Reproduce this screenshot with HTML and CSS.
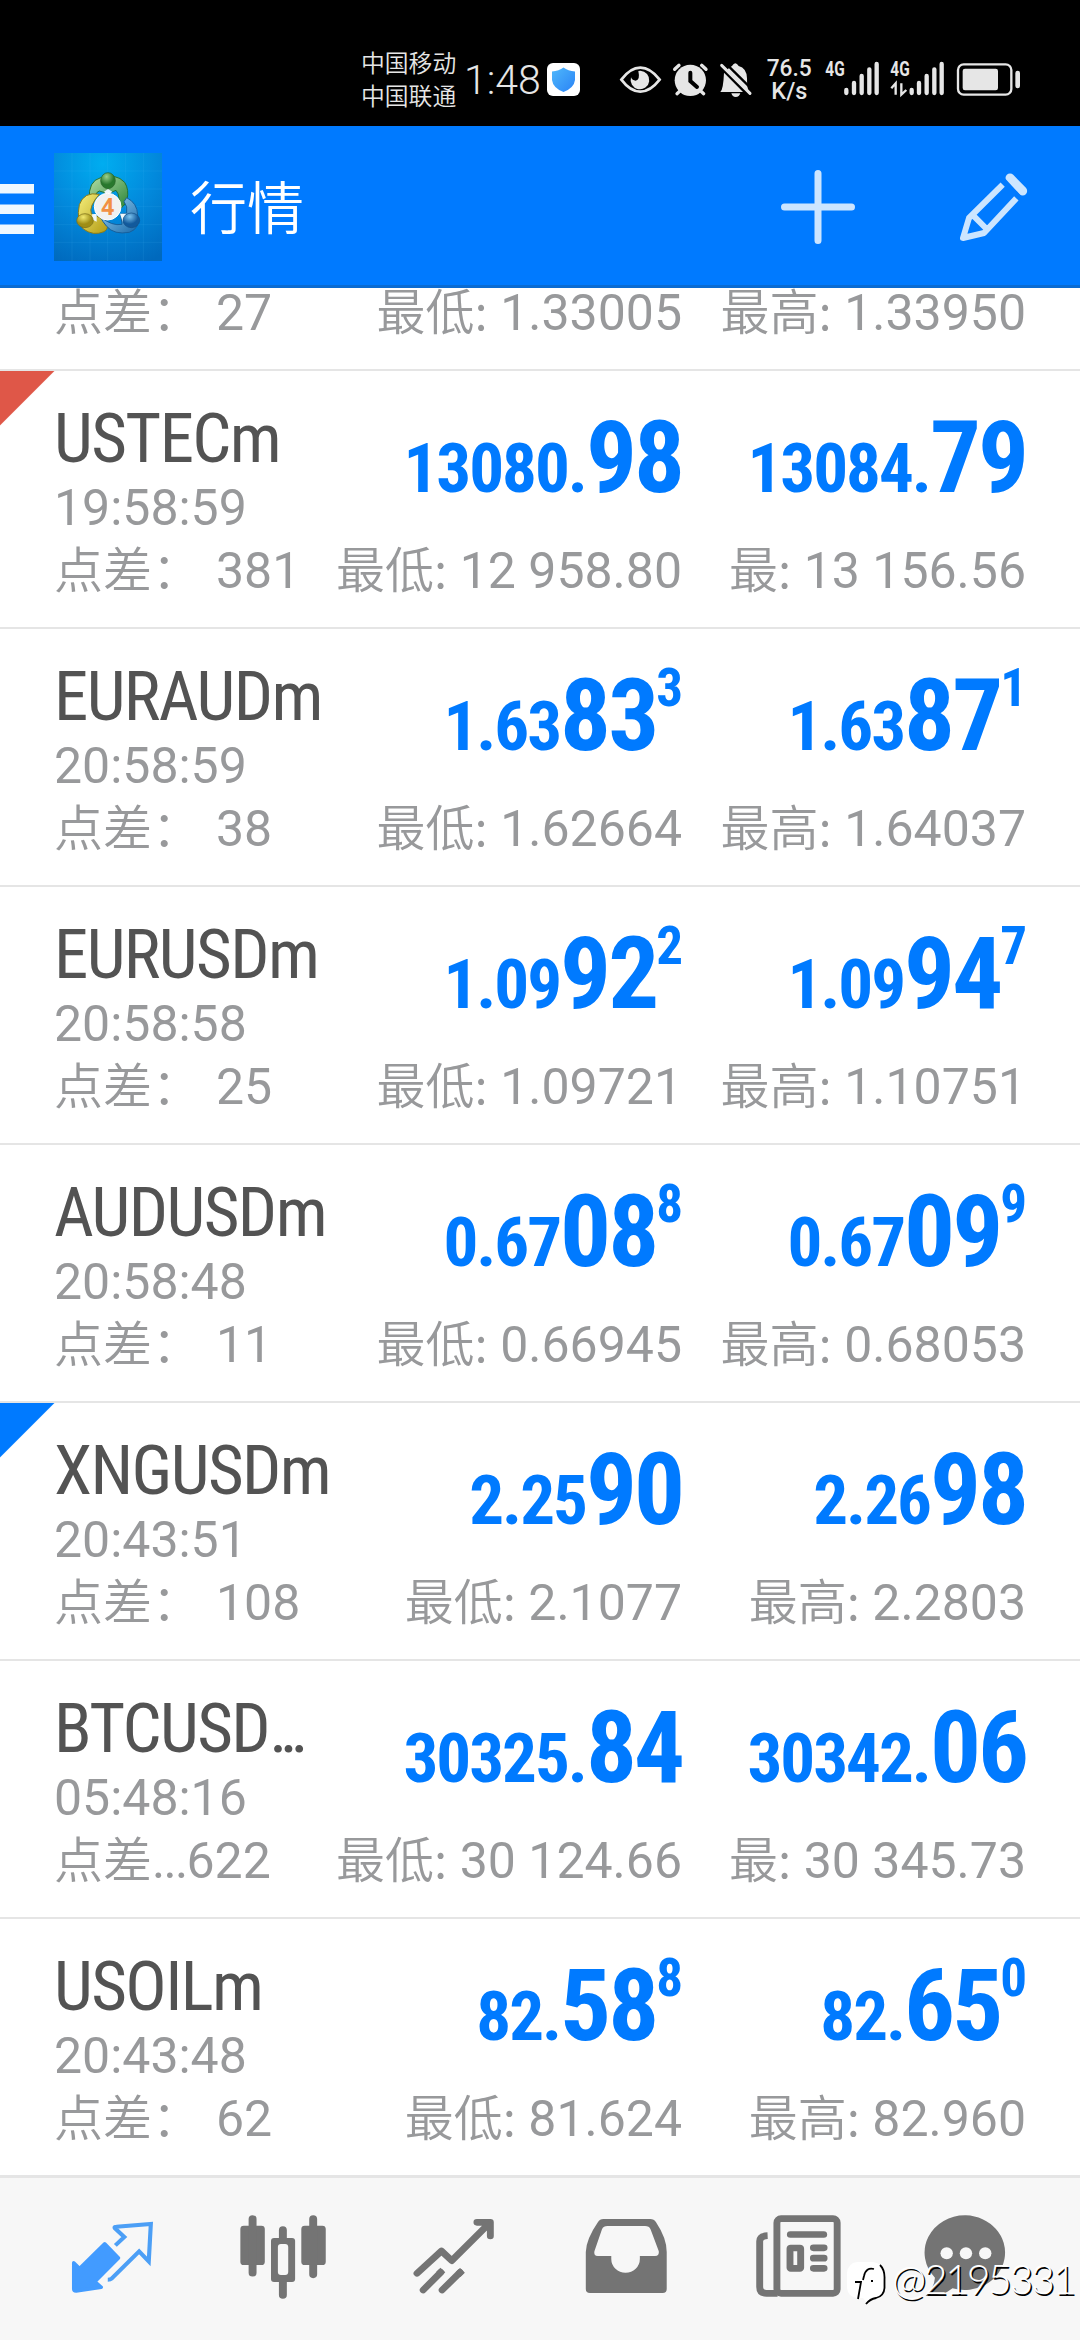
FILE: index.html
```html
<!DOCTYPE html>
<html lang="zh-CN">
<head>
<meta charset="utf-8">
<title>行情</title>
<link rel="stylesheet" href="styles.css">
</head>
<body>
<div class="screen">
  <div class="status">
    <div class="carriers"><span>中国移动</span><span>中国联通</span></div>
    <span class="clock">1:48</span>
    <svg class="shield" width="33" height="33" viewBox="0 0 33 33"><defs><linearGradient id="sh" x1="0" y1="0" x2="1" y2="1"><stop offset="0" stop-color="#4fb8fb"/><stop offset="1" stop-color="#2a83f6"/></linearGradient></defs><rect width="33" height="33" rx="6" fill="#fff"/><path d="M16.500 4.500Q21 8 28 8.500V17Q27 25 16.500 29Q6 25 5 17V8.500Q12 8 16.500 4.500Z" fill="url(#sh)"/></svg>
    <svg class="indicators" width="420" height="60" viewBox="54 30 1260 180" fill="#e6e6e6">
      <path d="M61 119Q88 83 118 83Q148 83 176 119Q148 155 118 155Q88 155 61 119Z" fill="none" stroke="#e6e6e6" stroke-width="8"/>
      <path d="M118 92A28 28 0 1 1 90 112Q94 122 104 122Q118 120 112 93Z"/>
      <circle cx="268" cy="121" r="47"/><path d="M221 88L234 76M315 88L302 76M228 161L240 150M308 161L296 150" stroke="#e6e6e6" stroke-width="10" stroke-linecap="round"/><path d="M268 98V123L288 141" fill="none" stroke="#000" stroke-width="12" stroke-linecap="round"/>
      <path d="M376 92L442 150Q438 143 438 115Q437 84 413 78Q403 62 393 78L384 84ZM369 98L426 156H358Q367 148 369 98ZM391 160H418Q415 171 404 171Q394 171 391 160Z"/><path d="M362 76L447 160" stroke="#e6e6e6" stroke-width="9" stroke-linecap="round"/><path d="M378 74L454 149" stroke="#000" stroke-width="7"/>
      <path d="M736 150V159M759 129V159M782 108V159M805 88V159M827 72V159M932 150V159M954 129V159M977 108V159M1000 88V159M1022 72V159" stroke="#e6e6e6" stroke-width="13" stroke-linecap="round"/>
      <path d="M871 145L884 130V164M916 150L901 164V130" fill="none" stroke="#e6e6e6" stroke-width="7"/>
      <rect x="1071" y="73" width="160" height="91" rx="17" fill="none" stroke="#e6e6e6" stroke-width="7"/><rect x="1085" y="86" width="106" height="65" rx="7"/><rect x="1243" y="92" width="14" height="53" rx="7"/>
      <text class="net" x="497" y="109" textLength="135" lengthAdjust="spacingAndGlyphs">76.5</text><text class="net" x="511" y="176" textLength="108" lengthAdjust="spacingAndGlyphs">K/s</text>
      <text class="gen" x="673" y="109" textLength="58" lengthAdjust="spacingAndGlyphs">4G</text><text class="gen" x="868" y="109" textLength="58" lengthAdjust="spacingAndGlyphs">4G</text>
    </svg>
  </div>

  <header class="bar">
    <svg class="menu" width="34" height="50" viewBox="0 0 34 50" fill="#f0f8ff"><path d="M0 0H34V9.500H0ZM0 20.500H34V30H0ZM0 40.500H34V50H0Z"/></svg>
    <svg class="logo" width="108" height="108" viewBox="0 0 324 324">
      <defs>
        <radialGradient id="bg" cx=".45" cy=".1" r="1"><stop offset="0" stop-color="#00adf0"/><stop offset=".5" stop-color="#0289dc"/><stop offset="1" stop-color="#0069bd"/></radialGradient>
        <linearGradient id="g" x2="1" y2="1"><stop offset="0" stop-color="#b5dfa8"/><stop offset="1" stop-color="#278234"/></linearGradient>
        <linearGradient id="y" x2="1" y2="1"><stop offset="0" stop-color="#f5ef7d"/><stop offset="1" stop-color="#b39b12"/></linearGradient>
        <linearGradient id="b" x2="1" y2="1"><stop offset="0" stop-color="#9fd8f7"/><stop offset="1" stop-color="#1667a9"/></linearGradient>
        <radialGradient id="gh" cx=".4" cy=".25"><stop offset="0" stop-color="#9cd08e"/><stop offset="1" stop-color="#28782d"/></radialGradient>
        <radialGradient id="yh" cx=".4" cy=".25"><stop offset="0" stop-color="#f2e96f"/><stop offset="1" stop-color="#9f8d15"/></radialGradient>
        <radialGradient id="bh" cx=".4" cy=".25"><stop offset="0" stop-color="#7cc3ee"/><stop offset="1" stop-color="#125a9c"/></radialGradient>
      </defs>
      <rect width="324" height="324" fill="url(#bg)"/>
      <path d="M54 0V324M108 0V324M161 0V324M215 0V324M268 0V324M0 54H324M0 108H324M0 161H324M0 215H324M0 268H324" stroke="#5cc8ff" stroke-opacity=".16" stroke-width="2"/>
      <path d="M106 140Q102 84 140 74Q186 60 212 88Q226 110 219 140Q210 165 190 170Q202 130 186 112L162 122L136 114Q120 120 122 145Z" fill="url(#g)" stroke="#247332" stroke-width="3"/>
      <path d="M136 124Q90 115 76 155Q66 205 88 228Q118 250 150 236Q170 225 152 202L126 188L112 182Q104 160 136 124Z" fill="url(#y)" stroke="#8a7b19" stroke-width="3"/>
      <path d="M218 134Q250 150 251 186Q260 226 226 238Q180 246 158 220Q144 204 140 192Q174 220 204 214L200 184L218 180Q222 160 210 146Z" fill="url(#b)" stroke="#17609c" stroke-width="3"/>
      <path d="M150 116L162 108L175 116L168 122H156ZM114 184L128 182L128 206L116 200ZM198 182L216 182L212 192L206 206Z" fill="#eef7fb"/>
      <ellipse cx="162" cy="83" rx="22" ry="24" fill="url(#gh)" stroke="#27642b" stroke-width="2"/>
      <ellipse cx="93" cy="203" rx="25" ry="21" fill="url(#yh)" stroke="#776b18" stroke-width="2"/>
      <ellipse cx="232" cy="202" rx="25" ry="22" fill="url(#bh)" stroke="#144f83" stroke-width="2"/>
      <circle cx="161" cy="161" r="40" fill="#f1f1f1" stroke="#fff" stroke-width="3"/>
      <text class="four" x="161" y="185" text-anchor="middle">4</text>
    </svg>
    <h1 class="title">行情</h1>
    <svg class="plus" width="74" height="74" viewBox="0 0 74 74"><path d="M37 3.500V70.500M3.500 37H70.500" stroke="#cce5ff" stroke-width="7" stroke-linecap="round"/></svg>
    <svg class="pencil" width="68" height="68" viewBox="656 142 204 204" fill="none" stroke="#cce5ff" stroke-width="18"><path d="M784 177L683 277L665 337L728 322L825 218M693 267L736 310" stroke-linejoin="round" /><path d="M806 157L844 196" stroke-width="27" stroke-linecap="round"/><path d="M786 158L838 214" stroke="#007aff" stroke-width="7"/></svg>
  </header>

  <main class="list">
    <section class="row first">
      <div class="col last-line"><span class="info"><i>点差：</i><b>27</b></span></div>
      <div class="col quote last-line"><span class="info"><i>最低:</i> 1.33005</span></div>
      <div class="col quote last-line"><span class="info"><i>最高:</i> 1.33950</span></div>
    </section>
    <section class="row down">
      <div class="col"><span class="symbol">USTECm</span><span class="time">19:58:59</span><span class="info"><i>点差：</i><b>381</b></span></div>
      <div class="col quote"><span class="price">13080.<em>98</em></span><span class="info"><i>最低:</i> 12 958.80</span></div>
      <div class="col quote"><span class="price">13084.<em>79</em></span><span class="info"><i>最:</i> 13 156.56</span></div>
    </section>
    <section class="row">
      <div class="col"><span class="symbol">EURAUDm</span><span class="time">20:58:59</span><span class="info"><i>点差：</i><b>38</b></span></div>
      <div class="col quote"><span class="price">1.63<em>83</em><sup>3</sup></span><span class="info"><i>最低:</i> 1.62664</span></div>
      <div class="col quote"><span class="price">1.63<em>87</em><sup>1</sup></span><span class="info"><i>最高:</i> 1.64037</span></div>
    </section>
    <section class="row">
      <div class="col"><span class="symbol">EURUSDm</span><span class="time">20:58:58</span><span class="info"><i>点差：</i><b>25</b></span></div>
      <div class="col quote"><span class="price">1.09<em>92</em><sup>2</sup></span><span class="info"><i>最低:</i> 1.09721</span></div>
      <div class="col quote"><span class="price">1.09<em>94</em><sup>7</sup></span><span class="info"><i>最高:</i> 1.10751</span></div>
    </section>
    <section class="row">
      <div class="col"><span class="symbol">AUDUSDm</span><span class="time">20:58:48</span><span class="info"><i>点差：</i><b>11</b></span></div>
      <div class="col quote"><span class="price">0.67<em>08</em><sup>8</sup></span><span class="info"><i>最低:</i> 0.66945</span></div>
      <div class="col quote"><span class="price">0.67<em>09</em><sup>9</sup></span><span class="info"><i>最高:</i> 0.68053</span></div>
    </section>
    <section class="row up">
      <div class="col"><span class="symbol">XNGUSDm</span><span class="time">20:43:51</span><span class="info"><i>点差：</i><b>108</b></span></div>
      <div class="col quote"><span class="price">2.25<em>90</em></span><span class="info"><i>最低:</i> 2.1077</span></div>
      <div class="col quote"><span class="price">2.26<em>98</em></span><span class="info"><i>最高:</i> 2.2803</span></div>
    </section>
    <section class="row">
      <div class="col"><span class="symbol">BTCUSD<span class="dots">...</span></span><span class="time">05:48:16</span><span class="info"><i>点差</i><span class="dots-small">...</span>622</span></div>
      <div class="col quote"><span class="price">30325.<em>84</em></span><span class="info"><i>最低:</i> 30 124.66</span></div>
      <div class="col quote"><span class="price">30342.<em>06</em></span><span class="info"><i>最:</i> 30 345.73</span></div>
    </section>
    <section class="row">
      <div class="col"><span class="symbol">USOILm</span><span class="time">20:43:48</span><span class="info"><i>点差：</i><b>62</b></span></div>
      <div class="col quote"><span class="price">82.<em>58</em><sup>8</sup></span><span class="info"><i>最低:</i> 81.624</span></div>
      <div class="col quote"><span class="price">82.<em>65</em><sup>0</sup></span><span class="info"><i>最高:</i> 82.960</span></div>
    </section>
  </main>

  <nav class="tabs">
    <svg viewBox="78.400 24 496.600 486" preserveAspectRatio="none"><path d="M304 221L344 264L276 335L294 352L221 363Q214 363 214 357V278L231 295Z" fill="#429bff" stroke="#429bff" stroke-width="10" stroke-linejoin="round"/><path d="M335 226L361 201L333 174Q331 170 338 170L438 162L432 274L404 244L324 326Q321 329 313 329" fill="none" stroke="#4c9ff6" stroke-width="12"/></svg>
    <svg viewBox="575 24 496.600 486" preserveAspectRatio="none" fill="#747474"><rect x="698" y="167" width="71" height="118" rx="10"/><rect x="875" y="167" width="71" height="118" rx="10"/><path d="M733.500 147V308M909.500 147V313M821.500 180V375" stroke="#747474" stroke-width="23" stroke-linecap="round"/><rect x="787" y="204" width="70" height="132" rx="9"/><rect x="807" y="222" width="30" height="93" rx="9" fill="#f7f7f7"/></svg>
    <svg viewBox="1071.600 24 496.600 486" preserveAspectRatio="none" fill="none" stroke="#747474" stroke-width="20" stroke-linecap="round" stroke-linejoin="round"><path d="M1385 157H1424V198M1211 310L1282 243L1312 272L1420 161"/><path d="M1229 360L1280 307M1284 360L1336 307"/><path d="M1274 312L1286 300M1330 314L1343 301" stroke-linecap="butt"/></svg>
    <svg viewBox="0 24 496.600 486" preserveAspectRatio="none"><path d="M184 147H320Q331 147 337 157Q368 205 368 246V357Q368 369 356 369H145Q133 369 133 357V246Q134 208 168 157Q174 147 184 147Z" fill="#747474"/><path d="M196 168H305Q317 168 321 178L345 244Q347 258 334 258H290V267A41 41 0 0 1 207 267V258H168Q155 258 158 244L180 178Q184 168 196 168Z" fill="#f7f7f7"/></svg>
    <svg viewBox="496.600 24 496.600 486" preserveAspectRatio="none" fill="none" stroke="#747474" stroke-width="20"><rect x="688" y="146" width="175" height="224" rx="12"/><path d="M661 197Q638 198 638 214V351Q638 370 658 370H690"/><path d="M727 193.500H824M794 233.500H825M794 264.500H825M794 295H825" stroke-linecap="round"/><rect x="726" y="234" width="31" height="61" rx="2"/></svg>
    <svg viewBox="990.200 24 496.600 486" preserveAspectRatio="none"><path d="M1234 136A118 112 0 1 1 1195 355Q1170 378 1117 378Q1142 354 1144 323A117 112 0 0 1 1234 136Z" fill="#747474"/><g fill="#f7f7f7"><circle cx="1178" cy="250" r="18"/><circle cx="1234" cy="250" r="18"/><circle cx="1290" cy="250" r="18"/></g></svg>
  </nav>

  <div class="watermark">
    <svg width="40" height="46" viewBox="0 0 40 46"><path d="M10 1H26Q36 2 37 13V26Q36 35 28 38L20 42L16 37H10Q1 36 0 27V12Q1 2 10 1Z" fill="#fff"/><path d="M33 4Q38 9 37.500 18V27Q37 35 29 37Q23 38 19 43M27 8Q19 6 17 15L16 19M8 21H14L11 38M24 20H26" fill="none" stroke="#000" stroke-width="1.800"/></svg>
    <span>@2195331</span>
  </div>
</div>
</body>
</html>
```
FILE: styles.css
```css
* { box-sizing: border-box; }
body { margin: 0; background: #fff; font-family: Roboto, "Noto Sans CJK SC", sans-serif; }
svg { display: block; flex: none; }
.screen { position: relative; width: 1080px; height: 2340px; display: flex; flex-direction: column; overflow: hidden; }

.status { height: 126px; background: #000; color: #e6e6e6; display: flex; align-items: center; padding: 33px 0 0 361px; }
.carriers { display: flex; flex-direction: column; width: 103px; margin-top: -3px; font: 350 23.8px/33px "Noto Sans CJK SC", sans-serif; }
.clock { width: 83px; font: 350 41px/48px Roboto, sans-serif; white-space: nowrap; }
.indicators { margin-left: 39px; }
.net { font: 500 70px Roboto, sans-serif; }
.gen { font: 700 60px Roboto, sans-serif; }

.bar { height: 162px; background: #007aff; border-bottom: 3px solid #0a6bd2; display: flex; align-items: center; padding-top: 3px; color: #fff; }
.menu { margin-top: 3px; }
.logo { margin-left: 20px; }
.four { font: 700 68px "Open Sans", sans-serif; fill: #f29044; }
.title { margin: -7px auto 0 28px; font: 350 57px/80px "Noto Sans CJK SC", sans-serif; }
.plus { margin-right: 105px; }
.pencil { margin-right: 52px; }

.list { height: 1887px; overflow: hidden; background: #fff; }
.row { height: 258px; border-bottom: 2px solid #e5e5e5; display: grid; grid-template-columns: 256px 372px 344px; padding: 28px 0 0 54px; }
.first { height: 83px; padding-top: 0; }
.last-line { margin-top: -7px; }
.down { background: linear-gradient(135deg, #df5748 38px, transparent 39px); }
.up { background: linear-gradient(135deg, #007aff 38px, transparent 39px); }
.col { display: flex; flex-direction: column; white-space: nowrap; }
.quote { align-items: flex-end; }
.symbol { height: 80px; font: 400 69px/80px "Roboto Condensed", Roboto, sans-serif; font-stretch: 75%; letter-spacing: -1.600px; color: #535353; }
.dots { letter-spacing: -7.500px; }
.time { height: 60px; font-size: 50px; line-height: 58px; color: #98999b; }
.info { height: 64px; font-size: 50px; line-height: 64px; color: #98999b; }
.info i { font: 350 49px/0 "Noto Sans CJK SC", sans-serif; }
.info b { font-weight: 400; margin-left: 15px; }
.dots-small { letter-spacing: -1.700px; }
.price { height: 140px; font: 700 69px/117px "Roboto Condensed", Roboto, sans-serif; font-stretch: 75%; letter-spacing: -2px; color: #007aff; }
.price em { font-style: normal; font-size: 101px; letter-spacing: -3px; }
.price sup { font-size: 53px; line-height: 0; vertical-align: 44px; letter-spacing: -1px; }

.tabs { height: 165px; border-top: 3px solid #e5e5e5; background: #f7f7f7; display: grid; grid-template-columns: repeat(6, 171px); padding: 0 27px; }
.tabs svg { width: 171px; height: 162px; }

.watermark { position: absolute; left: 847px; top: 2261px; display: flex; align-items: center; gap: 5px; color: #fff; font: 300 41px/46px Lato, sans-serif; letter-spacing: -2.300px; text-shadow: 1.500px 1.500px 0 #000; }
.watermark span { margin-top: -10px; }
```
